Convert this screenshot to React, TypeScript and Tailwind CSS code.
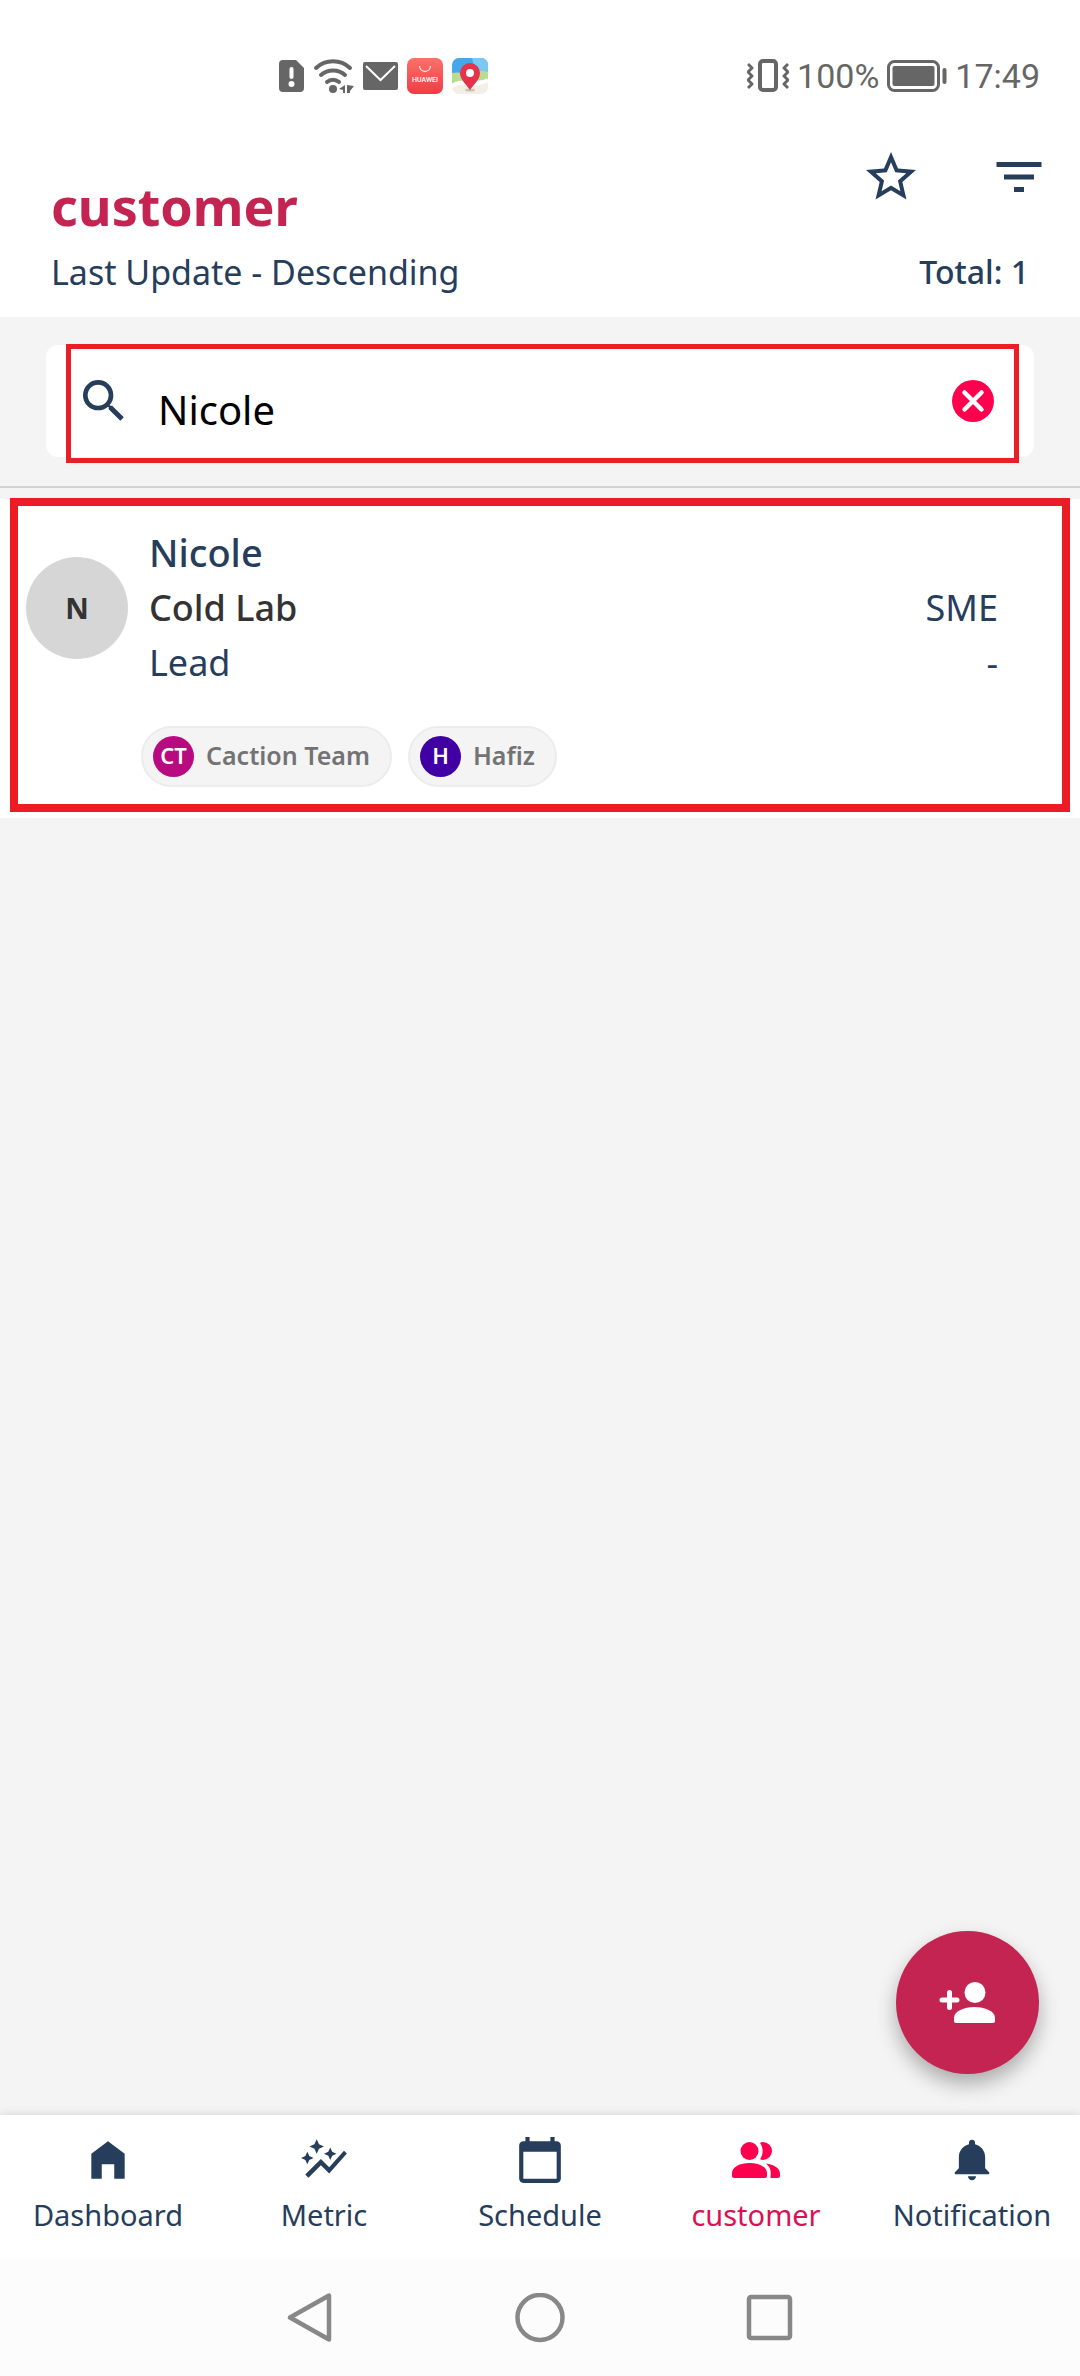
import React from "react";
import {
  MdAutoGraph,
  MdCalendarToday,
  MdFilterList,
  MdSearch,
  MdStarOutline,
} from "react-icons/md";
import { IoMdNotifications } from "react-icons/io";

function StatusBar() {
  return (
    <div className="flex h-[147px] items-center justify-between pt-1 pr-10 pl-[279px] text-[#666666]">
      <div className="flex items-center gap-[9px]">
        <svg className="h-8 w-[25px]" viewBox="0 0 25 32" aria-hidden="true">
          <path d="M4 0h13l8 8v20a4 4 0 0 1-4 4H4a4 4 0 0 1-4-4V4a4 4 0 0 1 4-4z" fill="currentColor" />
          <path d="M12.500 9v8" stroke="#fff" strokeWidth="4" strokeLinecap="round" />
          <circle cx="12.500" cy="24" r="3" fill="#fff" />
        </svg>
        <svg className="h-[34px] w-[41px]" viewBox="0 0 41 34" aria-hidden="true">
          <g fill="none" stroke="currentColor" strokeWidth="4" strokeLinecap="round">
            <path d="M3 9a25 25 0 0 1 34 0" />
            <path d="M8 16a18 18 0 0 1 24 0" />
            <path d="M14 23a9 9 0 0 1 12 0" />
          </g>
          <circle cx="20" cy="30" r="4" fill="currentColor" />
          <path d="M32 26v8h-2v-3l-4-1zM34 26l7 1-4 5v2h-3z" fill="currentColor" />
        </svg>
        <svg className="h-7 w-[35px]" viewBox="0 0 35 28" aria-hidden="true">
          <rect width="35" height="28" rx="2" fill="currentColor" />
          <path d="M3 4l14.500 14L32 4" fill="none" stroke="#fff" strokeWidth="2" />
        </svg>
        <svg className="h-9 w-9" viewBox="0 0 36 36" aria-hidden="true">
          <defs>
            <linearGradient id="store" x1="0" y1="0" x2="0" y2="1">
              <stop offset="0" stopColor="#fb7168" />
              <stop offset="1" stopColor="#f03c46" />
            </linearGradient>
          </defs>
          <rect width="36" height="36" rx="7" fill="url(#store)" />
          <path d="M12.500 8a5.500 5.500 0 0 0 11 0" fill="none" stroke="#ffd9d6" strokeWidth="1.300" />
          <text x="18" y="24" textAnchor="middle" fontSize="7" fontWeight="500" fill="#fff" fontFamily="Roboto, sans-serif">
            HUAWEI
          </text>
        </svg>
        <svg className="h-9 w-9" viewBox="0 0 36 36" aria-hidden="true">
          <defs>
            <clipPath id="map">
              <rect width="36" height="36" rx="7" />
            </clipPath>
          </defs>
          <g clipPath="url(#map)">
            <rect width="36" height="36" fill="#f3efe6" />
            <path d="M0 0h36v14c-12 6-22 2-36 6z" fill="#46a8ea" />
            <path d="M20 0h16v14l-12 2z" fill="#7cc8f2" />
            <path d="M0 15c8-2 12 2 20 0s12-3 16 0v8c-12-4-24 6-36 3z" fill="#b9dd8e" />
            <path d="M0 28c10-8 24 2 36-6" fill="none" stroke="#fff" strokeWidth="4" />
            <ellipse cx="18" cy="32" rx="5" ry="1.500" fill="#c9c4ba" />
            <path d="M18 32C13 25 8 21 8 15a10 10 0 0 1 20 0c0 6-5 10-10 17z" fill="#e5334a" />
            <circle cx="18" cy="15" r="4" fill="#fff" />
          </g>
        </svg>
      </div>
      <div className="flex items-center gap-2 font-[Roboto,sans-serif] text-[34px] leading-10">
        <svg className="h-[33px] w-[42px]" viewBox="0 0 42 33" aria-hidden="true">
          <g fill="none" stroke="currentColor" strokeWidth="4" strokeLinejoin="round">
            <rect x="13" y="2" width="16" height="29" rx="3" />
            <path d="M1 5l4 4-4 4 4 4-4 4 4 4-4 4" strokeWidth="3" />
            <path d="M41 5l-4 4 4 4-4 4 4 4-4 4 4 4" strokeWidth="3" />
          </g>
        </svg>
        <span>100%</span>
        <svg className="h-8 w-[60px]" viewBox="0 0 60 32" aria-hidden="true">
          <rect x="1.500" y="1.500" width="50" height="29" rx="6" fill="none" stroke="currentColor" strokeWidth="3" />
          <rect x="5.500" y="6" width="42" height="20" rx="2" fill="currentColor" />
          <path d="M57.500 10v12" stroke="currentColor" strokeWidth="4" strokeLinecap="round" />
        </svg>
        <span>17:49</span>
      </div>
    </div>
  );
}

function Header() {
  return (
    <header className="flex justify-between pr-[31px] pb-[25px] pl-[51px]">
      <div className="pt-[29px]">
        <h1 className="text-[52px] leading-[60px] font-bold text-[#c32452]">customer</h1>
        <p className="mt-4 text-[34px] leading-10">Last Update - Descending</p>
      </div>
      <div className="flex flex-col items-end justify-between">
        <div className="flex gap-[68px]">
          <button type="button" aria-label="Favourites">
            <MdStarOutline className="size-[60px]" />
          </button>
          <button type="button" aria-label="Filter">
            <MdFilterList className="size-[60px]" />
          </button>
        </div>
        <p className="pr-5 text-[32px] leading-10 font-medium">Total: 1</p>
      </div>
    </header>
  );
}

function SearchBar() {
  return (
    <div className="border-b-2 border-[#d2d2d2] px-[46px] pt-7 pb-[29px]">
      <div className="relative flex h-[112px] items-center rounded-xl bg-white pr-10 pl-[30px]">
        <MdSearch className="size-14 shrink-0" />
        <input
          type="text"
          aria-label="Search customers"
          defaultValue="Nicole"
          className="ml-[26px] h-full min-w-0 flex-1 bg-transparent pt-4 text-[40px] text-black outline-none"
        />
        <button type="button" aria-label="Clear search">
          <svg className="size-[42px]" viewBox="0 0 42 42" aria-hidden="true">
            <circle cx="21" cy="21" r="21" fill="#ff004f" />
            <path d="M12.500 12.500l17 17M29.500 12.500l-17 17" stroke="#fff" strokeWidth="4.500" strokeLinecap="round" />
          </svg>
        </button>
        <div className="pointer-events-none absolute -top-px right-[15px] -bottom-1.5 left-5 border-[5px] border-[#e81f27]" />
      </div>
    </div>
  );
}

function Chip({ initials, name, color }: { initials: string; name: string; color: string }) {
  return (
    <li className="flex h-[61px] items-center gap-3 rounded-full border-2 border-[#ececec] bg-[#f4f4f4] pr-5 pl-2.5">
      <span
        className="flex size-[41px] items-center justify-center rounded-full pb-1 text-[22px] leading-none font-semibold text-white"
        style={{ backgroundColor: color }}
      >
        {initials}
      </span>
      <span className="pb-1 text-[25px] leading-8 font-semibold text-[#737373]">{name}</span>
    </li>
  );
}

function CustomerCard() {
  return (
    <article className="relative mt-[11px] bg-white pt-[26px] pb-[31px]">
      <div className="flex items-center gap-[21px] pr-[82px] pl-[26px]">
        <div className="flex size-[102px] shrink-0 items-center justify-center rounded-full bg-[#d6d6d6] text-[29px] font-bold text-[#333333]">
          N
        </div>
        <div className="flex-1 text-[36px] leading-[55px]">
          <h2 className="text-[38px] font-medium">Nicole</h2>
          <div className="flex justify-between">
            <p className="font-medium text-[#333333]">Cold Lab</p>
            <p>SME</p>
          </div>
          <div className="flex justify-between">
            <p>Lead</p>
            <p>-</p>
          </div>
        </div>
      </div>
      <ul className="mt-9 flex gap-4 pl-[141px]">
        <Chip initials="CT" name="Caction Team" color="#b90b80" />
        <Chip initials="H" name="Hafiz" color="#4000a3" />
      </ul>
      <div className="pointer-events-none absolute inset-x-2.5 -top-px bottom-1.5 border-8 border-[#ed1c24]" />
    </article>
  );
}

function AddButton() {
  return (
    <button
      type="button"
      aria-label="Add customer"
      className="absolute right-[41px] bottom-[41px] flex size-[143px] items-center justify-center rounded-full bg-[#c32452] text-white shadow-[0_10px_20px_rgba(0,0,0,0.3)]"
    >
      <svg className="h-[41px] w-[57px]" viewBox="0 0 57 41" fill="currentColor" aria-hidden="true">
        <circle cx="36" cy="10.500" r="10.500" />
        <path d="M15 36c0-7 10-11 20.500-11S56 29 56 36v3a2 2 0 0 1-2 2H17a2 2 0 0 1-2-2z" />
        <path d="M10.500 10.500v15M3 18h15" stroke="currentColor" strokeWidth="5" strokeLinecap="round" />
      </svg>
    </button>
  );
}

function HomeIcon() {
  return (
    <svg className="size-[50px]" viewBox="0 0 24 24" fill="currentColor" aria-hidden="true">
      <path d="M4 21V9l8-6 8 6v12h-5v-7H9v7z" />
    </svg>
  );
}

function PeopleIcon() {
  return (
    <svg className="size-[50px]" viewBox="0 0 50 50" fill="#ff004f" aria-hidden="true">
      <circle cx="18.500" cy="16" r="9" />
      <path d="M1 38c0-6 8-10 17.500-10S36 32 36 38v3a2 2 0 0 1-2 2H3a2 2 0 0 1-2-2z" />
      <path d="M29 8c1-.7 2-1 3-1a9 9 0 0 1 0 18c-1 0-2-.2-3-.7 3.500-5 3.500-11.500 0-16.300z" />
      <path d="M35 28.500c8 .8 14 5 14 10V41a2 2 0 0 1-2 2h-7.500c.5-6 .8-10-4.500-14.500z" />
    </svg>
  );
}

const tabs = [
  { label: "Dashboard", icon: <HomeIcon /> },
  { label: "Metric", icon: <MdAutoGraph className="size-[50px]" /> },
  { label: "Schedule", icon: <MdCalendarToday className="size-[50px]" /> },
  { label: "customer", icon: <PeopleIcon />, active: true },
  { label: "Notification", icon: <IoMdNotifications className="size-[50px]" /> },
];

function TabBar() {
  return (
    <nav className="relative grid grid-cols-5 bg-white pt-5 pb-[26px] shadow-[0_-1px_8px_rgba(0,0,0,0.12)]">
      {tabs.map((tab) => (
        <a
          key={tab.label}
          href="#"
          aria-current={tab.active ? "page" : undefined}
          className={`flex flex-col items-center gap-3 text-[29px] leading-9 ${tab.active ? "text-[#dc1052]" : ""}`}
        >
          {tab.icon}
          {tab.label}
        </a>
      ))}
    </nav>
  );
}

function SystemNav() {
  return (
    <div className="relative flex h-[117px] items-center justify-center gap-[180px] bg-[#fcfcfc] text-[#888888]">
      <button type="button" aria-label="Back">
        <svg className="size-[50px]" viewBox="0 0 50 50" fill="none" stroke="currentColor" strokeWidth="4.500" strokeLinejoin="round" aria-hidden="true">
          <path d="M5 24.500L44 2.500v44z" />
        </svg>
      </button>
      <button type="button" aria-label="Home">
        <svg className="size-[50px]" viewBox="0 0 50 50" fill="none" stroke="currentColor" strokeWidth="4.500" aria-hidden="true">
          <circle cx="25" cy="24.500" r="22.500" />
        </svg>
      </button>
      <button type="button" aria-label="Recent apps">
        <svg className="size-[50px]" viewBox="0 0 50 50" fill="none" stroke="currentColor" strokeWidth="4.500" aria-hidden="true">
          <rect x="4" y="4" width="41" height="41" rx="2" />
        </svg>
      </button>
    </div>
  );
}

export default function App() {
  return (
    <div className="flex min-h-screen flex-col bg-[#f4f4f4] font-['Noto_Sans',sans-serif] text-[#263d5c]">
      <div className="bg-white">
        <StatusBar />
        <Header />
      </div>
      <main className="relative flex-1">
        <SearchBar />
        <CustomerCard />
        <AddButton />
      </main>
      <TabBar />
      <SystemNav />
    </div>
  );
}
